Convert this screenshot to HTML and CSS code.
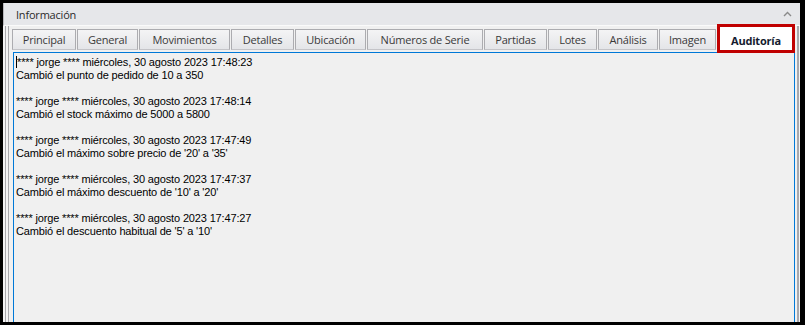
FILE: index.html
```html
<!DOCTYPE html>
<html lang="es">
<head>
    <meta charset="UTF-8">
    <title>Información - Auditoría</title>
    <link rel="stylesheet" href="styles.css">
</head>
<body>
    <div class="window">
        <div class="group-header">
            <span class="group-title">Información</span>
            <svg class="collapse-icon" width="9" height="6" viewBox="0 0 9 6">
                <polyline points="1,5 4.5,1.5 8,5" fill="none" stroke="#8a8a8a" stroke-width="1.4"/>
            </svg>
        </div>
        <div class="group-body">
            <div class="group-inner">
                <ul class="tabs">
                    <li class="tab" style="width: 64px">Principal</li>
                    <li class="tab" style="width: 61px">General</li>
                    <li class="tab" style="width: 91px">Movimientos</li>
                    <li class="tab" style="width: 63px">Detalles</li>
                    <li class="tab" style="width: 71px">Ubicación</li>
                    <li class="tab" style="width: 116px">Números de Serie</li>
                    <li class="tab" style="width: 63px">Partidas</li>
                    <li class="tab" style="width: 49px">Lotes</li>
                    <li class="tab" style="width: 60px">Análisis</li>
                    <li class="tab" style="width: 57px">Imagen</li>
                    <li class="tab active">Auditoría</li>
                </ul>
                <div class="audit-log">
                    <div class="entry">
                        <div><span class="caret"></span>**** jorge **** miércoles, 30 agosto 2023 17:48:23</div>
                        <div>Cambió el punto de pedido de 10 a 350</div>
                    </div>
                    <div class="entry">
                        <div>**** jorge **** miércoles, 30 agosto 2023 17:48:14</div>
                        <div>Cambió el stock máximo de 5000 a 5800</div>
                    </div>
                    <div class="entry">
                        <div>**** jorge **** miércoles, 30 agosto 2023 17:47:49</div>
                        <div>Cambió el máximo sobre precio de '20' a '35'</div>
                    </div>
                    <div class="entry">
                        <div>**** jorge **** miércoles, 30 agosto 2023 17:47:37</div>
                        <div>Cambió el máximo descuento de '10' a '20'</div>
                    </div>
                    <div class="entry">
                        <div>**** jorge **** miércoles, 30 agosto 2023 17:47:27</div>
                        <div>Cambió el descuento habitual de '5' a '10'</div>
                    </div>
                </div>
            </div>
        </div>
    </div>
</body>
</html>
```

FILE: styles.css
```css
body {
    margin: 0;
    background-color: #000;
    height: 325px;
    overflow: hidden;
    font-family: 'Open Sans', 'Liberation Sans', sans-serif;
}

.window {
    margin: 3px 5px 0 3px;
    height: 319px;
    background-color: #f3f3f4;
    display: flex;
    flex-direction: column;
}

.group-header {
    height: 22px;
    display: flex;
    align-items: center;
    justify-content: space-between;
    padding: 0 8px 0 12px;
    background-color: #e6e7ea;
    border-bottom: 1px solid #fafafa;
    border-left: 1px solid #b8b8bc;
}

.group-title {
    font-size: 11px;
    letter-spacing: -0.2px;
    color: #2b2b2b;
}

.collapse-icon {
    display: block;
}

.group-body {
    flex: 1;
    margin: 0 1px 0 2px;
    border-left: 1px solid #a8a8ac;
    border-right: 1px solid #a8a8ac;
    padding: 0 1px 0 2px;
    display: flex;
    min-height: 0;
}

.group-inner {
    flex: 1;
    border-left: 1px solid #a8a8ac;
    border-right: 1px solid #a8a8ac;
    background-color: #f0f0f0;
    padding: 0 2px 0 4px;
    display: flex;
    flex-direction: column;
    min-height: 0;
}

.tabs {
    list-style: none;
    margin: 3px 0 0 -1px;
    padding: 0;
    display: flex;
    align-items: flex-start;
    height: 23px;
}

.tab {
    box-sizing: border-box;
    height: 21px;
    margin-right: 1px;
    border: 1px solid #acacb0;
    border-bottom-color: #c4c4c8;
    background: linear-gradient(#f4f4f5, #e4e5e8);
    font-size: 11px;
    letter-spacing: -0.2px;
    color: #3a3a3a;
    display: flex;
    align-items: center;
    justify-content: center;
    flex-shrink: 0;
}

.tab.active {
    position: relative;
    width: 78px;
    height: 29px;
    margin: -5px 0 0 0;
    background: #fff;
    border: none;
    font-weight: bold;
    color: #141a2e;
    padding-top: 3px;
}

.tab.active::after {
    content: '';
    position: absolute;
    inset: 0;
    border: 3px solid #c00000;
}

.audit-log {
    flex: 1;
    border: 1px solid #0078d7;
    border-bottom: none;
    padding: 3px 0 0 2px;
    font-family: 'Liberation Sans', Arial, sans-serif;
    font-size: 11px;
    letter-spacing: -0.15px;
    line-height: 13px;
    color: #000;
}

.entry {
    margin-bottom: 13px;
}

.caret {
    display: inline-block;
    width: 1px;
    height: 12px;
    background-color: #000;
    vertical-align: -2px;
}
```
